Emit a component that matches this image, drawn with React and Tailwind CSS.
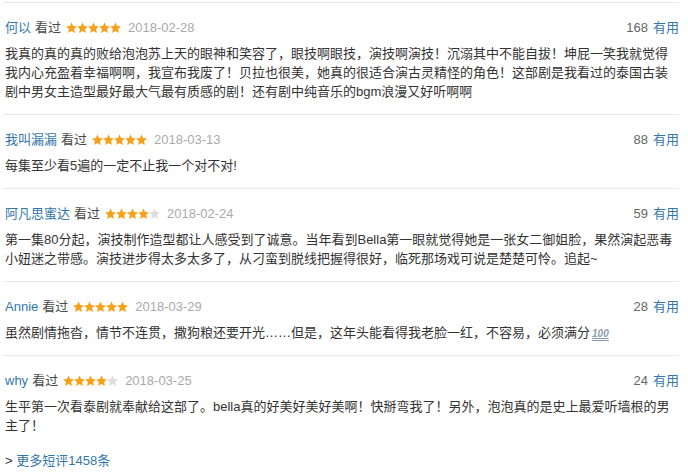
import React from "react";

const comments = [
  {
    user: "何以",
    rating: 5,
    date: "2018-02-28",
    votes: 168,
    text: "我真的真的真的败给泡泡苏上天的眼神和笑容了，眼技啊眼技，演技啊演技！沉溺其中不能自拔！坤屁一笑我就觉得我内心充盈着幸福啊啊，我宣布我废了！贝拉也很美，她真的很适合演古灵精怪的角色！这部剧是我看过的泰国古装剧中男女主造型最好最大气最有质感的剧！还有剧中纯音乐的bgm浪漫又好听啊啊",
  },
  {
    user: "我叫漏漏",
    rating: 5,
    date: "2018-03-13",
    votes: 88,
    text: "每集至少看5遍的一定不止我一个对不对!",
  },
  {
    user: "阿凡思蜜达",
    rating: 4,
    date: "2018-02-24",
    votes: 59,
    wide: true,
    text: "第一集80分起，演技制作造型都让人感受到了诚意。当年看到Bella第一眼就觉得她是一张女二御姐脸，果然演起恶毒小妞迷之带感。演技进步得太多太多了，从刁蛮到脱线把握得很好，临死那场戏可说是楚楚可怜。追起~",
  },
  {
    user: "Annie",
    rating: 5,
    date: "2018-03-29",
    votes: 28,
    text: "虽然剧情拖沓，情节不连贯，撒狗粮还要开光……但是，这年头能看得我老脸一红，不容易，必须满分",
    hundred: true,
  },
  {
    user: "why",
    rating: 4,
    date: "2018-03-25",
    votes: 24,
    text: "生平第一次看泰剧就奉献给这部了。bella真的好美好美好美啊！快掰弯我了！另外，泡泡真的是史上最爱听墙根的男主了！",
  },
];

const Star = ({ on }) => (
  <svg width="11" height="11" viewBox="1 1 22 21">
    <path
      d="M12 1.5l3.2 7.1 7.8.8-5.8 5.3 1.6 7.7L12 18.5l-6.8 3.9 1.6-7.7L1 9.4l7.8-.8z"
      fill={on ? "#f7a11a" : "#dddddd"}
    />
  </svg>
);

const Stars = ({ rating }) => (
  <span className="inline-flex items-center mx-[5px]">
    {[1, 2, 3, 4, 5].map((i) => (
      <Star key={i} on={i <= rating} />
    ))}
  </span>
);

const CommentItem = ({ c, first, last }) => (
  <div
    className={`pt-[14px] ${last ? "pb-[15px]" : "pb-[13px] border-b border-[#e8e8e8]"}`}
  >
    <div className="flex items-center justify-between leading-[21px] pl-[1px]">
      <div className="flex items-center">
        <span className="text-[#3377aa]">{c.user}</span>
        <span className="ml-[4px] text-[#494949]">看过</span>
        <Stars rating={c.rating} />
        <span className="ml-[2px] text-[#aaaaaa]">{c.date}</span>
      </div>
      <div>
        <span className="text-[#666666]">{c.votes}</span>
        <span className="ml-[5px] text-[#3377aa]">有用</span>
      </div>
    </div>
    <p
      className={`mt-[6px] pl-[1px] ${c.wide ? "w-[680px]" : "w-[666px]"} leading-[19px] text-[#333333]`}
    >
      {c.text}
      {c.hundred && (
        <span className="ml-[2px] inline-block text-[10px] leading-[10px] italic font-bold text-[#8a9bb0] underline decoration-double">
          100
        </span>
      )}
    </p>
  </div>
);

export default function App() {
  return (
    <div className="w-[688px] h-[472px] bg-white overflow-hidden text-[13px] font-['Liberation_Sans','Noto_Sans_CJK_SC',sans-serif]">
      <div className="ml-[4px] mt-[2px] w-[675px] border-t border-[#e8e8e8]">
        {comments.map((c, i) => (
          <CommentItem
            key={c.user}
            c={c}
            first={i === 0}
            last={i === comments.length - 1}
          />
        ))}
        <div className="pl-[1px] leading-[21px]">
          <span className="text-[#333333]">&gt; </span>
          <a className="text-[#3377aa]">更多短评1458条</a>
        </div>
      </div>
    </div>
  );
}
